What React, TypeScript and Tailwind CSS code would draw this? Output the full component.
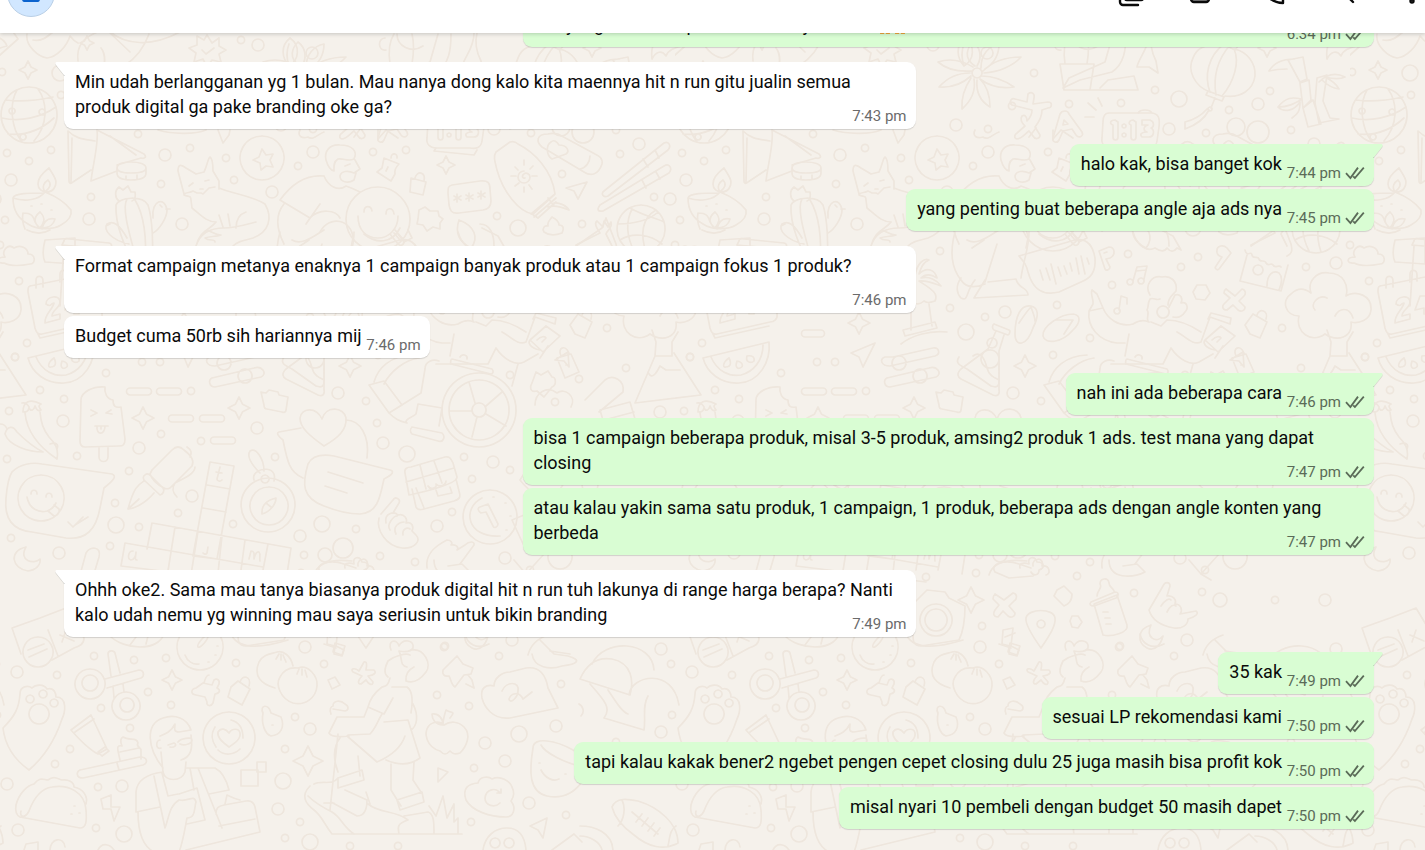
/**
 * Chat conversation view
 * Header bar on top, message groups anchored to the bottom over a doodle wallpaper.
 */

import type { ReactNode } from 'react';
import { clsx } from 'clsx';

interface Message {
  text: ReactNode;
  time: string;
}

interface MessageGroup {
  from: 'me' | 'them';
  /** Continues a group that started further up, so it has no tail */
  continued?: boolean;
  messages: Message[];
}

const groups: MessageGroup[] = [
  {
    from: 'me',
    continued: true,
    messages: [
      {
        text: (
          <>
            Betul kak, nanti semua materi dan update terbarunya bisa langsung diakses dari member area ya, tinggal login saja
            <br />
            kak yang 1 bulan dipakai selamanya kakak <Hands />
          </>
        ),
        time: '6:34 pm',
      },
    ],
  },
  {
    from: 'them',
    messages: [
      {
        text: 'Min udah berlangganan yg 1 bulan. Mau nanya dong kalo kita maennya hit n run gitu jualin semua produk digital ga pake branding oke ga?',
        time: '7:43 pm',
      },
    ],
  },
  {
    from: 'me',
    messages: [
      { text: 'halo kak, bisa banget kok', time: '7:44 pm' },
      { text: 'yang penting buat beberapa angle aja ads nya', time: '7:45 pm' },
    ],
  },
  {
    from: 'them',
    messages: [
      {
        text: 'Format campaign metanya enaknya 1 campaign banyak produk atau 1 campaign fokus 1 produk?',
        time: '7:46 pm',
      },
      { text: 'Budget cuma 50rb sih hariannya mij', time: '7:46 pm' },
    ],
  },
  {
    from: 'me',
    messages: [
      { text: 'nah ini ada beberapa cara', time: '7:46 pm' },
      {
        text: 'bisa 1 campaign beberapa produk, misal 3-5 produk, amsing2 produk 1 ads. test mana yang dapat closing',
        time: '7:47 pm',
      },
      {
        text: 'atau kalau yakin sama satu produk, 1 campaign, 1 produk, beberapa ads dengan angle konten yang berbeda',
        time: '7:47 pm',
      },
    ],
  },
  {
    from: 'them',
    messages: [
      {
        text: 'Ohhh oke2. Sama mau tanya biasanya produk digital hit n run tuh lakunya di range harga berapa? Nanti kalo udah nemu yg winning mau saya seriusin untuk bikin branding',
        time: '7:49 pm',
      },
    ],
  },
  {
    from: 'me',
    messages: [
      { text: '35 kak', time: '7:49 pm' },
      { text: 'sesuai LP rekomendasi kami', time: '7:50 pm' },
      {
        text: 'tapi kalau kakak bener2 ngebet pengen cepet closing dulu 25 juga masih bisa profit kok',
        time: '7:50 pm',
      },
      { text: 'misal nyari 10 pembeli dengan budget 50 masih dapet', time: '7:50 pm' },
    ],
  },
];

/* Wallpaper: one 675px wide tile of line doodles */

const smallDots: [number, number][] = [
  [2, 72], [61, 95], [241, 40], [7, 153], [51, 150], [29, 161], [138, 134], [190, 148], [161, 184],
  [226, 158], [234, 180], [91, 197], [5, 220], [298, 166], [373, 152], [406, 150], [480, 90],
  [446, 103], [595, 91], [554, 110], [531, 133], [616, 130], [337, 106], [359, 73], [394, 104],
  [313, 129], [620, 154], [562, 174], [497, 216], [582, 224], [654, 197], [265, 251], [275, 308],
  [310, 317], [382, 305], [415, 338], [378, 355], [453, 254], [437, 285], [506, 267], [523, 257],
  [631, 267], [675, 245], [694, 281], [607, 328], [626, 368], [690, 357], [579, 379], [555, 402],
  [702, 343], [15, 357], [106, 373], [142, 362], [160, 362], [40, 390], [64, 399], [9, 411],
  [191, 391], [161, 434], [77, 456], [129, 471], [7, 459], [115, 503], [178, 513], [139, 527],
  [233, 524], [275, 457], [377, 423], [366, 401], [464, 457], [472, 479], [452, 512], [356, 529],
  [380, 556], [415, 562], [304, 555], [110, 546], [11, 538], [201, 441], [94, 656], [134, 660],
  [166, 658], [236, 663], [57, 675], [148, 692], [171, 705], [101, 708], [130, 728], [70, 749],
  [55, 764], [98, 787], [96, 828], [285, 749], [300, 822], [285, 838], [295, 717], [324, 664],
  [445, 646], [499, 656], [437, 695], [469, 706], [474, 768], [471, 822], [566, 815], [561, 684],
  [350, 846], [398, 846], [251, 577], [301, 573], [402, 576], [307, 626], [459, 593], [527, 592],
  [444, 647], [671, 664], [672, 715], [616, 742], [510, 375], [533, 455], [560, 470], [602, 436],
  [645, 470], [510, 470], [575, 520], [640, 545], [530, 570], [600, 600],
];

const bigDots: [number, number, number][] = [
  [60, 73, 8], [258, 45, 6], [11, 180, 6], [165, 155, 6], [89, 219, 6], [182, 224, 6], [272, 192, 6],
  [313, 152, 6], [504, 99, 8], [583, 104, 6], [494, 129, 6], [281, 125, 6], [312, 53, 6],
  [561, 127, 9], [583, 132, 11], [639, 144, 6], [518, 228, 8], [670, 199, 6], [330, 312, 6],
  [291, 332, 8], [338, 393, 6], [661, 263, 6], [63, 421, 6], [139, 448, 6], [192, 496, 6],
  [257, 428, 6], [383, 443, 6], [407, 454, 8], [493, 462, 6], [437, 526, 6], [322, 524, 8],
  [300, 536, 6], [116, 525, 8], [59, 553, 6], [325, 555, 7], [343, 548, 10], [505, 558, 6],
  [17, 672, 6], [305, 647, 6], [310, 729, 6], [283, 781, 8], [278, 809, 6], [310, 842, 8],
  [122, 786, 6], [124, 834, 8], [7, 784, 6], [18, 830, 6], [485, 743, 6], [519, 734, 8],
  [505, 761, 6], [529, 803, 6], [556, 726, 6], [512, 640, 6], [661, 649, 6], [661, 732, 6],
  [590, 485, 8], [660, 412, 6], [545, 600, 7], [650, 600, 6],
];

const sparkles: [number, number, number][] = [
  [28, 70, 9], [446, 165, 9], [184, 323, 11], [350, 366, 11], [143, 418, 11], [239, 408, 11],
  [172, 680, 10], [308, 761, 15], [296, 600, 13], [560, 440, 10], [620, 510, 9], [87, 43, 7],
  [592, 48, 9],
];

const doodles: string[] = [
  // pot, leaves and petals along the top
  'M27 34c-2 12 12 23 20 24 10-1 20-12 23-22 3 4 6 6 8 7M33 40c8 2 14-3 20-8M0 55l18-16-9-13',
  'M78 61c-2-16 6-24 22-30M101 48c5 6 4 18 1 28M149 34c-5 14-14 25-25 32M110 32c15 12 40 16 70 0M110 33l20 19',
  'M207 35l5 8 7-5 0 8 7 4-7 4 2 8-9-2-5 7-4-8-9 3 2-9-7-5 8-3 0-9 7 4zM202 50l4 4 8-6',
  'M290 38c-10 8-8 20-1 28 10-6 12-20 1-28M289 66c-3-9-2-17 0-22',
  // globe
  'M29 87a28 28 0 1 0 .1 0M6 100c15 2 33 0 47-3M2 118c18 4 38 0 54-11M8 134c18 2 34-5 46-16M17 90c-8 14-6 38 5 52M38 89c10 14 10 36-4 52M12 108a3 3 0 1 0 .1 0M42 109a3 3 0 1 0 .1 0M23 134a3 3 0 1 0 .1 0',
  // flower
  'M302 68a5 5 0 1 0 .1 0M300 66c-12-8-8-18-2-24 8 6 9 16 4 24M306 68c0-14 8-22 18-24 0 12-6 20-14 25M308 71c10-10 22-14 38-14-8 9-22 15-37 16M307 76c12 0 22 4 32 11-14 2-26-2-34-8M305 79c8 8 10 18 10 28-10-6-14-16-13-27M299 79c2 12-3 22-12 30-1-12 3-22 9-31M296 76c-9 8-20 12-32 11 8-9 18-14 31-14M297 71c-14 1-26-2-34-9 12-4 25-1 35 5',
  // translate glyphs
  'M337 105c-4-3 0-8 3-6l12 3 1-8c4-3 7 0 6 4l-1 6 15-2c5 0 4 6 0 6l-6 2c0 6-3 12-7 17l5 8c0 4-5 5-7 1l-4-5c-5 4-8 8-12 8-4-1-2-5 0-6l8-7c-4-4-5-7-3-10 3-2 5 1 5 5 3-3 5-7 5-11zM378 138l7-24c2-4 8-4 9 0l13 18c2 4-3 7-6 3l-4-6-9 2-4 9c-2 4-7 2-6-2zM388 125l1-5 4 4z',
  // plant pot
  'M385 64h34l-4 26h-26zM390 64c-2-14 0-24 4-30M412 64c2-12 2-22 0-30M386 50c-8 2-9-12-1-12M397 34c0 12 14 20 26 12M451 34c0 16-2 30-14 38l-32 8-17 8 6-10 36-16 8-28M399 90h64l-4-14-26 4-8 8M474 33c0 16-10 24-12 34h12l9 6-2-12c-5-10-6-20-4-28',
  // alarm clock
  'M434 113h42c8 0 9 6 8 14l-2 14c-1 7-6 8-12 7h-34c-6 0-10-4-9-10l1-16c0-6 2-9 6-9zM463 113c2-4 12-4 14 0M436 148l-2 3 40 4 3-5M421 110l-8-7M427 106l-4-8M419 117h-9M440 120c-5 0-6 4-2 5v12c0 4 5 4 5 0v-15zM449 124a2 2 0 1 0 .1 0M449 133a2 2 0 1 0 .1 0M458 120c-4 0-5 4-2 5v12c0 4 5 4 5 0v-15zM467 120h8c5 2 4 7 1 8 4 2 3 9-2 9h-7c-3-3 0-5 5-5-4-1-4-6 1-7h-6z',
  // lantern
  'M535 92c-16-6-23-22-17-34 4-12 16-15 32-14M550 96c16 2 28-6 30-20 1-13-8-24-20-27M535 92c-6-16-2-36 14-48M541 95c-3-18 2-36 14-50M547 96c12-14 18-34 12-47M543 42l17 8 4-5-20-8zM533 91l16 6-2 4-16-6zM540 98l-4 10M535 107a2 2 0 1 0 .1 0M534 110c-4 8-10 14-24 19v-7c8-2 16-6 22-13',
  // bamboo
  'M613 60l15-3 4 22-7 3zM625 83l9-3 2 20-8 8zM628 108l10-8 8 24-13 3zM642 78l10-3-4 26 7 17 9 1-20 4-4-20zM594 71c6-10 16-12 25-12M594 71c8-2 14-2 18-2M644 82c8-8 16-10 26-5-6 3-12 2-20 0 8 4 12 8 14 12-8-1-12-4-17-9M603 107c8-10 14-10 24-8-7 4-13 8-24 8 6 6 16 4 22-5 0 9-2 12-8 16',
  'M656 40c10-6 22-4 26 6-8 2-14 4-16 10-4-6-10-5-14 3-1-8 0-14 4-19',
  // map and bowl
  'M68 131l1 50c0 3 2 3 4 1l18-12M72 138l-1 44M68 131c8 8 16 8 27 10M97 130c2 12-4 34-6 51l26-10M97 130l47 24c3 3 1 5-3 4l-24 7M110 136l26 19',
  'M131 162c-8 0-14 2-14 6s6 5 14 5 15-1 15-5-7-6-15-6M117 168v5c0 5 6 7 14 7s15-2 15-7v-5M126 176v4M137 175v4',
  // oil lamp
  'M49 168c-8 6-11 12-11 16 0 5 4 8 9 8 6 0 9-5 9-10 0-4-4-9-7-14M45 192c-4-6 0-10 3-12 4 4 2 8-3 12M44 193c-14 0-30 0-31 5 0 10 4 20 15 26 9 6 25 6 33 1 9-5 11-10 10-15-6-8-16-14-26-18-6 8-20 10-32 6M23 213c9 0 10 3 12 9M25 229c-3-7-3-11-2-16M40 212c-9 7-4 14 2 17M40 212c7 7 3 12 0 16M55 219c-9-2-12 5-13 10M55 219c-2 8-8 9-14 9M27 230c8 4 16 4 23 0M31 206h1M41 204h1M51 210h1',
  // cactus
  'M119 201c-4-3-5-10 0-14l4 3 5-4 3 6 4 0c1 5 0 8-3 9M116 205c-1 20 8 40 20 64M116 205c3-8 26-10 32 0 4 12 6 40 4 64M127 199c-6 10 4 40 12 70M135 200c10 16 12 40 10 69M127 238c-8-14-14-18-20-14-4 6 4 16 22 20M153 218c-2-18 12-22 14-8 0 8-8 20-14 23M106 226l4-2M160 205l2 2M166 209l4 0',
  // box
  'M62 245l2-4c0-2 2-3 5-2l40 4c4 1 3 5 0 6M62 245l46 4M64 246l-4 60',
  // fox
  'M184 194l-6-23c0-7 3-7 8-3l10 6 8-2c3-6 4-14 6-15 3 2 3 10 3 14l6 10v8M184 194c3-2 6-1 9-3l4 2 4 0 2 1 6-6 6-1M189 186l4-3M205 181l4-1M200 189l3 0M184 195c4 2 7 0 7 5l1 8c8 6 14 14 24 14M219 188c14 6 34 8 46 16 8 14 4 28-12 34-12 3-16 4-20 8M216 222c-6 8-16 8-20 24M196 246c4-12 14-18 28-18 12 0 24-4 32-6M205 231c6-2 8 4 16 4-6 2-11 1-16 3 4 4 10 0 10 4M219 215l4 12M228 214l2 12M236 228c0-10 4-14 10-16',
  // star coin
  'M262 136a22 22 0 1 0 .1 0M262 149l4 6 7-1-3 6 3 7-7-1-5 4-1-7-7-3 6-3z',
  'M158 130c14 4 36 5 48 0M218 130l5 13 6-8 1-5M300 130c-3 6 2 9 8 7 5 4 10-3 16-5M354 137l7-9M378 130v9l8-9 12 8',
  // man and yum face
  'M326 160c-2-8 3-16 14-15 12 0 18 6 14 14-6 3-10-1-16 0-5 3-4 8-4 12-4-1-6-4-8-11M355 160l5 9-6 4c-6-3-13-2-14 3 0 6 8 8 14 4l2-7M345 166l5-2M324 176c-20-2-34 10-44 24l30 18-4 6 14-20M324 176c4 10 14 16 22 10 6 2 10 4 14 6M284 204c-10 12-6 28 0 40M310 218c10-10 26-8 30 0M320 232c10-18 32-12 33 6l-2 10',
  'M378 187a32 32 0 1 0 32 32c0-16-14-32-32-32M358 216c0 14 8 22 20 22 10 0 20-8 20-22M364 212c0-7 7-7 8-1M386 214c0-7 7-7 8 0M390 234l8 10c4 4 8-2 5-5l-8-9M394 233l6 7',
  'M384 158l15 6c-3 3-5 6-4 10l-4 7-14-9 5-4zM391 158c0-6 7-5 6 0M388 167l-2 4M411 178l15 4-3 13-13-3zM415 178c2-8 11-6 9 3',
  'M419 210l6-3 5 4 8 0 1 5 4 3-3 4v6l-7-2-6 4-4-6-6-1 1-5zM452 185l28-4c8-1 10 2 10 8l1 12c0 5-2 8-8 9l-24 3c-8 1-9-3-10-8l-1-12c0-5 0-7 4-8M457 194v8M454 196l7 4M461 196l-7 4M469 193v8M466 195l7 4M473 195l-7 4M481 191v8M478 193l7 4M485 193l-7 4M459 220c-4 12 0 22 12 28 8-10 4-22-12-28',
  // sun cream
  'M496 152l14-10c3-1 6 0 8 2 16 8 34 26 37 50l-22 20c-14-2-30-22-36-44-2-8-4-14-1-18M555 194l-24 20M556 198l-22 19M556 202l-18 16M548 198l6 8M532 214l6 4M548 207c5-2 14 0 21 3-2-4-10-8-15-7',
  'M524 171a6 6 0 1 0 6 6c0-3-4-5-6-3-3 2-1 5 1 4M524 160v5M524 187v5M511 176h5M532 176h5M515 167l3 3M529 185l3 4M515 186l4-3M530 169l3-3',
  // bandage and chopsticks
  'M548 134c-12 0-12 8-6 13l42 25c6 4 14 4 18-8 1-6-3-8-7-10l-37-20c-4-1-7-1-10 0M551 142c3-3 6 0 8 3 8 0 11 6 7 9l-14 5c-6-4-6-14-1-17M590 156c0 6-4 12-10 13',
  'M664 143c4-2 8 2 4 7l-60 46c-4 2-8-2-4-5zM664 166c5-3 9 2 5 7l-66 38c-6 1-6-2-3-6zM655 150l4 8M643 159l5 8M656 172l4 7M642 180l4 8',
  'M566 188l21-6-9 17-4-8zM544 232c-2-3 0-7 4-6-1-4 2-6 4-9 4 2 7 4 7 8 5 0 5 4 3 8-8 3-14 2-18-1M494 246c0-12-4-22-14-22M576 245l24-12c-4-6-6-10-3-12l6 6 1-6 4 6 3-5c2 6-4 8-5 12l6 12',
  // basketball
  'M641 205a24 24 0 1 0 .1 0M630 208c14 8 26 10 34 14M618 224c16 0 32-4 40-12M632 209c-6 12-6 26 2 42M620 240c12-8 30-6 42 4M656 210c-14 8-16 24-10 42',
  // palm and runner legs
  'M240 276c2-14 10-18 14-16-6 2-8 8-10 14 8-8 16-4 18 4-6-4-12-4-16 0 8-2 16 2 20 8-8-3-14-6-22-5 12 8 20 12 16 20-6 2-8 2-11 0-4 4-8 3-11 2M236 306v24M254 304l3 22M228 330l32-8 2 6-32 8zM226 344c10-8 28-14 46-12',
  'M280 232c-6 22-2 38 6 48 5 8 14 8 24 4M286 278c-6 8-4 16 0 20 8 4 4-6 14-18M310 280l-11 18 54-3c0-8-10-6-12-16l-28 3M322 244l-12 38M354 232c0 16-6 30-8 46M292 240c10 6 22-4 32-10M297 248l12-8',
  // voice bubble
  'M344 256l56-16c12-2 18 6 20 18 1 14-4 20-14 24l-22 10c-16 4-26-2-31-20-2-8-4-10-9-16M365 270l3 10M371 268l4 12M376 264l5 20M383 267l3 9M389 266l3 8M395 263l2 8M401 258l3 16M406 256l4 18M412 258l2 6M364 234c12 10 28 10 36-6M398 234l6 8 8-4-4-8',
  'M424 251l10-4c6 0 7 8 1 11l-4 1 4 8c0 3-4 4-5 2zM429 253l3-1M458 232c4 14 14 20 22 16 6 4 10 3 12 0 4 5 8 3 10 0l4 2-8-14-16-8M542 250c0-4 6-6 10-2l4 5-12 16c-2 2-5-1-3-3l6-9c-3-1-6-3-5-7',
  // house
  'M576 246l26-18 4-10M606 218l10 26c2 8 0 10-4 12M570 250c2 8 6 0 7 5 1 5 6 0 7 4 1 4 6 0 7 4 2 4 6-1 7 2 2 4 6-1 8 2M572 255l-7 26 41 10 7-26M583 265a5 5 0 1 0 .1 0M592 286c0-12 6-16 12-13 4 4 3 10 0 17',
  // music and hexagon
  'M458 281l4-14 10-1-3 13M461 271l10-1M455 279a3 3 0 1 0 .1 0M466 278a3 3 0 1 0 .1 0M444 310l2-14 6 2 0 6M442 308a3 3 0 1 0 .1 0M522 285l9 0 4 8-5 7-9-1-3-7zM551 289l9 7 7-7c4 1 4 5 2 7l-5 5 6 6c0 4-4 5-7 3l-5-5-6 5c-5 0-5-4-3-6l6-6-6-5c0-3 2-4 2-4M680 257c-4-6 3-14 9-9 6-4 14 0 14 6 8 0 8 10 2 10-10 2-20 2-26-1-8 1-8-6 1-6M720 240l30-2v26l-30-2c-3-6-2-14 0-22',
  // dancer with phone
  'M414 311c-2 16 10 30 28 32h8M414 311l14-3-6-14-5-4c-2 4 2 10 1 14l-4 7M428 308c4 10 16 20 30 16M454 334l-4 22M458 324c6-4 12-4 16-2M473 321c-2-4 2-8-1-11 2-3 0-6 3-11 4-2 6 2 10 0M475 295c-6-10 2-20 12-18 8-2 16 4 14 14-3 4-8 6-8 14M488 306a6 6 0 1 0 .1 0M494 307l6-12c6-2 8 4 6 8 6-2 8 5 4 9-4 6-8 6-12 5M476 322l10 4 6-6c10 0 22 4 34 12M526 342c-8 4-16-6-24-10M526 342l9-25 20 7 1-6-20-5-3 6M548 346l-8 12M530 340l16-14 14 10-17 16zM537 340c4-4 8-4 9-2l-4 4M530 340c-2 2-1 8 10 10M436 364l52 0 8-16c8 12 20 18 28 14l14-8M518 364l-6 22',
  // slippers and flask
  'M356 306c-10-2-16 10-16 28 0 14 12 12 18-6 6-12 6-20-2-22M344 323c4-6 8-12 12-16 2 6 4 10 4 14M398 314c8 1 8 8 0 16-12 14-28 14-30 6-1-10 18-22 30-22M380 320l18 0-9 14',
  'M319 324l15 6c2 1 0 5-1 5l-14-5c-2-1-2-5 0-6M321 331l-8 18-27 20c-5 5-3 8 0 10l32 16c5 2 7-1 6-6l0-38 5-16M317 338a5 5 0 1 0 .1 0M315 350a9 9 0 1 0 .1 0M298 356c8-6 12 4 14 12 2 8 8 10 12 12',
  // tags and cursors
  'M570 325l8-11 14 8-7 16-10-4zM582 315c2-8 12-4 9 4M557 358l14-4 8 18-14 6zM561 356c-4-8 4-12 8-3M566 365h1M555 360l13-8 1 15-5-6zM536 372l5 3 7-4 4 6c4 0 5 8 0 10l-8 10-7-6c-8 2-7-5-5-8z',
  // puff tree and volcano
  'M650 334c-14 10-30-2-26-18-14 0-18-16-8-22 8-8 16-4 20-1-4-12 6-22 18-20 14 0 20 12 17 23 10-6 26-1 25 14-1 10-12 14-20 12 2 16-14 20-26 12M640 310c-6-6 4-16 12-12M660 316c4-8 14-10 18 2M652 330l4 12-1 14h17v-14l6-10M655 356l-20 47 66-8-27-42M648 372c4 10 10-2 12-6l6 4 14 0',
  // calendar and watermelon
  'M30 286l60-12c6 0 7 6 8 10l4 30c1 5-3 8-7 8l-53 12c-4 1-6-2-7-6l-7-36c0-4 0-5 2-6M36 288v-8c0-5 7-5 7 1v6M60 282v-8c0-5 7-5 7 1v6M82 278v-8c0-5 7-5 7 1v6M46 304c0-8 14-10 14-2 0 6-8 8-8 14l8-2v5l-15 4c-1-8 8-14 9-20-4 0-2 5-8 1M70 296l-5 14 9-2v6h5v-18zM38 334l2 4 54-12',
  'M28 358l66-16c2 20-10 40-30 41-18 1-32-10-36-25M36 357c6 14 18 20 30 18 12-3 22-14 22-30M54 358c-6 4-7 10-3 9 4 0 6-3 3-9M62 361c-2 6 0 8 3 7 4-1 3-6-3-7M72 356c-2 6 4 8 7 5 1-4-2-6-7-5',
  // dashes
  'M130 330h16a3 3 0 0 1 0 7h-16a3 3 0 0 1 0-7M130 388h18a3 3 0 0 1 0 7h-18a3 3 0 0 1 0-7M160 388h18a3 3 0 0 1 0 7h-18a3 3 0 0 1 0-7M172 415h18a3 3 0 0 1 0 7h-18a3 3 0 0 1 0-7M203 415h18a3 3 0 0 1 0 7h-18a3 3 0 0 1 0-7M214 437h18a3 3 0 0 1 0 7h-18a3 3 0 0 1 0-7',
  'M176 353l24-10-12 24-4-10zM218 357l40-9c6-1 8 6 2 8l-45 10c-9 0-11-7-5-9zM224 356a7 7 0 1 0 .1 0M212 378l42-10c8-3 14 6 7 9l-46 10c-6 0-7-7-3-9M245 369a7 7 0 1 0 .1 0',
  // chilies and ice lolly
  'M23 412c0-10 6-14 18-8-4 2-1 4 0 6-4 2-5-2-6-4-1 4-4 6-6 2-1 4-3 4-6 4M25 413c2 20 14 34 32 46 2-10-2-16-8-22-6-8-8-14-9-25M22 403c4-1 6 2 7 4M5 434c2-8 8-9 12-2 6 6 18 16 26 20-14 0-34-6-38-18M0 424c4 0 6 2 7 5M50 444c6-2 9 0 7 5',
  'M81 400c0-8 12-14 24-13-1 6 2 12 8 13 0 6 2 8 8 7l4 32c0 6-2 7-6 7l-34 1c-4 0-5-3-5-6zM99 447v10c0 6 9 6 9 0v-10M91 410l6 3-6 3M111 410l-5 3 6 1M95 426l13 0M97 426c-1 10 8 9 8 0M101 426v3M261 392l5 1 3-3 9 2 1 3 9 2-2 13c0 2-2 3-4 2l-15-3c-3 0-3-2-3-4z',
  // wheelchair
  'M479 373a37 37 0 1 0 .1 0M479 380a30 30 0 1 0 .1 0M479 403a7 7 0 1 0 .1 0M469 382l6 21M486 406l16-14M486 414l20 12M477 417l-5 20M449 411h23M369 385l15-4 18 24-13 8zM384 384c6-12 20-24 35-26M374 382c4-14 16-26 38-27M389 413l32-20 4-24c0-8 8-10 14-8M406 422c0-4 6-4 10-8l2-10 24 4-3 18M412 427l30 6c4 4 1 10-4 8l-26-7c-2-2-2-5 0-7M452 359l40 10c2 2 1 5-1 5l-40-10c-1-2 0-5 1-5M460 357c2-4 8-2 7 2M389 413c6 6 10 8 18 10M284 357c-4 6 0 8 8 12l24 17c6 2 8 0 8-4v-26',
  // fountain pen
  'M152 470l20-20c4-4 8-4 12 0 8 6 10 12 8 16l-22 22c-2 1-4 1-6 0-8-4-12-8-14-14zM145 475c2-2 4-1 6 1l12 12c2 3 0 6-3 7l-16-15c-1-2-1-4 1-5M144 481c-6 4-10 6-16 28 4 0 16-4 26-16M128 509l11-10M187 447c6 4 4 7 3 10M195 467c0 6-8 10-20 16-4 6-2 10 2 14',
  // smiling chat bubble
  'M12 472c8-8 20-10 30-8l70 10c5 2 2 6-8 14l-4 20c-4 22-14 32-34 30l-34-6c-20-2-28-14-26-34 1-12 2-20 6-26M41 475a23 23 0 1 0 .1 0M27 497c2 12 12 16 20 14 6-2 8-6 9-8M31 494c0-5 6-5 6 0M46 497c0-5 6-5 6 0M48 511l6 5c4 0 6-4 5-7l-5-4M68 522l5 5 10-10M75 525l13-8',
  // crossword
  'M210 462l24 4-17 93-24-3zM207 485l23 4M203 508l23 4M152 523l139 25-4 26M152 523l-5 26M125 543l138 24M125 543l-4 23 130 16M175 527l-8 50M198 531l-8 50M222 536l-5 46M245 540l-4 30M268 544l-5 26M220 467l-3 12c0 2 3 3 5 1M216 472l6 1M133 551c-5 0-6 8-2 9 3 0 5-4 5-8 0 4-2 8 1 8M208 547l-1 6c-1 2-3 1-4 0M249 559l2-8c4 0 3 4 3 8 1-5 3-8 5-7 2 2 0 6 1 9',
  // compass
  'M268 478a27 27 0 1 0 .1 0M269 487a19 19 0 1 0 .1 0M262 512c0-8 6-12 14-14 0 6-6 14-14 16zM266 503l5 4M254 480c-2-6 4-10 10-11 8 0 12 4 10 12M265 475a4 4 0 1 0 .1 0M260 473c-8-8-14-16-10-22 6-4 14 8 14 20',
  // heart and text bubbles
  'M324 446c-14-10-24-18-24-28 1-10 16-12 22 1 4-14 22-12 24-1 1 12-8 20-22 28M301 428l-22 4c-3 1-1 4 4 8 4 20 6 32 20 38M346 420c14 0 24 16 21 38M308 464c4-8 14-10 26-8l56 14c4 1 4 4-6 9-4 18-6 34-24 35-12 0-26-4-36-8-22-8-22-22-16-42M328 472l35 11M325 486l22 7',
  'M405 473c-1-4 2-6 6-6l34-10c5-1 6 2 8 6l4 14c1 6-28 14-48 18zM420 465l6 24M434 461l8 22M406 482l48-14M412 489l4 18c1 3 4 3 8 2l30-8c6-2 7-4 5-10l-3-12M428 486c2 4 10 2 8-2 4 4 10 1 10-3M436 490l2 6 14-3-2-6M416 488l8 20',
  'M490 490a27 27 0 1 0 .1 0M482 498c-20 10-16 40 18 38M480 507l8-3 10 20c0 3-4 5-5 2l-7-14-5 1c-3-2-4-5-1-6M493 497h1M505 503h1M510 516h1M506 530h1',
  // hands
  'M381 514l12-14c2-4 8-1 6 3l-6 10M386 523c-2-10 8-12 12-8 6-2 10 4 8 8 6-2 8 4 6 8l4 4c6 6-2 14-14 13-16-2-26-18-23-30M390 530c-4-6 4-14 7-14M396 534c-4-8 4-12 8-12M403 535c-1-6 4-8 7-6M427 568c-2-14 8-22 20-28 4 0 6 3 4 5 6-1 8 3 6 5l8-5c4-4 10-4 9 0l-14 19',
  'M26 547c-18 4-14 22 2 24 8-1 13-6 12-12-6 6-22 2-14-12M80 575l6-22c4-7 16-7 13 4l-6 20M314 575c4-14 20-16 38-14M358 566c-2-8 12-10 9 0 8-1 9 8 4 9',
  // eye patch box, pie, clock
  'M12 628l28-10 26-10 18 30c0 6-4 8-10 10l-22 12M12 628l9 26M48 630l10 26M60 635l14 6M66 630l-4 12M38 637a15 15 0 1 0 .1 0M28 650l16-6M29 657l18-8M110 636c14 14 48 16 54-2M130 645l6-8M146 644l2-8M200 624a23 23 0 1 0 .1 0M198 647c-2-2 8-14 10-12 1 4-8 14-10 12M185 655c2 6 8 10 14 9M217 646h1M215 655h1M208 662h1M232 636c8 14 30 12 56 4',
  // scissors
  'M90 669a15 15 0 1 0 .1 0M90 675a8 8 0 1 0 .1 0M126 692a14 14 0 1 0 .1 0M127 698a7 7 0 1 0 .1 0M105 679l34-9c5 0 6 6 2 8l-34 10M108 654c0-4 6-4 7-1l5 20M108 654l3 22M113 686l1 12M123 684l1 8',
  // paw and tube
  'M3 728c12-12 16-20 17-34 0-8 8-9 12-6 4-4 12-4 15 1 8-2 9 6 9 8 12 0 9 16 6 22-8 24-20 40-33 51-14-10-24-24-26-42M39 704a10 10 0 1 0 .1 0M30 695a4 4 0 1 0 .1 0M43 690a4 4 0 1 0 .1 0M54 699a4 4 0 1 0 .1 0',
  'M71 730l20-15 16 34-9 5c-8-4-20-16-27-24M75 732l19-13M98 752l7-5 4 4-7 5zM80 770l60-13c8 0 8 6 3 8l-60 13c-7 0-7-6-3-8M117 763l2 7M120 760l-2-9c-1-4 0-6 4-5-2-5-1-8 1-9 6 4 14 0 15 6-3 4 4 4 3 8v8M120 752l19-4',
  // taco and bolt
  'M20 817c-4-2-5-6-4-12 3-12 12-20 18-21 6-8 10-4 14-4 6-5 10-1 14 0 6-1 12 2 12 7 10 2 14 10 12 17M20 817l60 11c6 0 7-6 6-18-1-18-18-26-34-23-14 2-20 16-23 24-4 8-10 6-8 0M74 806h1M79 813h1M71 814h1M101 799l10-4 0 12 9 0-6 14-3-12-8 0zM24 850l2-6 12-2v8M50 850c0-12 14-14 15-3M98 850c4-8 12-6 16 0',
  'M203 683l9 2 2-5c3-2 6 0 5 4l-2 4c4 2 3 5-2 6l-2 9c-2 4-7 3-6-1l-2-5-9-2c-6-1-5-6 0-7zM204 683c0 0 2-8 5-8M231 687l7-6 12 8-8 16-14-8zM240 682c2-8 12-6 9 4M263 713c-4-8 6-10 8 0l10 4c4 10 0 18-10 19-6-2-10-12-8-23M272 725h1',
  // buns
  'M275 688c-14-4-22-12-16-26 4-8 12-8 18-10 6-2 14 4 16 14M276 659l3-5M281 660v-6M286 662l-3-7M298 668c10-4 20 8 19 18-1 12-12 20-24 17-12-4-18-18-13-26 4-8 10-10 18-9M297 674l2-5M302 675v-6M307 677l-2-7M328 680l7-3 5 8-8 4zM330 637l10-4M335 643l10 3-3 9-9-3zM324 644l12 4',
  'M364 662c3-1 3 3 2 8l8 0c3 3 0 5-6 6l5 6c0 4-4 3-7-2l-5 4c-4 0-3-4 1-8l-9-4c-3-3 1-5 6-1z',
  // latte cup and cubes
  'M229 712a26 26 0 1 0 .1 0M229 747c-8-6-12-10-11-15 3-5 8-3 11 1 3-5 10-5 11 0 1 6-5 10-11 14M215 727c-5 8-3 14 1 20M231 720c8 2 12 8 12 18M218 750c6 6 16 5 22-1M241 770h17v16h-17zM257 762h9v10h-9z',
  // reader with glasses
  'M163 768c-16-20-18-44 0-50 12-4 24 0 28 12l-12 2c-6 0-4-4-4-8-4 8-10 10-15 12M191 735c2 14 0 22-10 25M161 748c-6 2-5-8-1-8M161 752l2 20c2 10 18 10 22 0l1-10M168 745l6-2c4 2 0 5-4 4M178 742c2-3 14-6 14-2s-8 6-12 4M163 772c-16 2-26 8-27 20v20l24-5M154 776l11 52c4-10 4-22 14-28M162 773l6 23 10-2M187 768l28 0c8 4 12 14 14 22l-20 4M190 768l4 22M198 768l24 60M179 794l18-6 8 32-18 4M180 800c8 2 14-6 16 2-2 6 0 16-9 16-2 10-4 24-8 34M138 812c0 20 4 34 16 40M216 814c0-6 2-8 8-9l22-4c6-1 8 2 9 6l5 25-74 18M219 826l36-7M225 804l2-9c4 2 8 4 13 5',
  // hiker
  'M388 677c-6-4-2-12 0-16 8-6 18-8 22-6M391 650c-4-10 6-12 8-4 4-8 16-6 14 2-2 4-8 4-14 3M412 650c12-2 20 14 14 22-6 8-12 12-20 9-1-8 4-12 8-14M399 651c4 8 0 14 8 16M390 678c-2 8-4 8-8 9-8 6-12 12-14 20l16 7 9-16M392 687l15 0c6 4 6 14 4 26M382 714c-4 6-6 14-12 20l-22 1M368 707l-4 10-14 0M349 717l-12 0-8 16c2 4 12 4 20 3M331 714c-2-4 0-8 2-8 0-6 8-6 12-2 4 2 4 6 0 7l-12-2M413 704c6 12 4 22-2 26M384 722l24-2 12 38c-8 6-20 8-34 2M405 736c-4 12-14 20-28 26l-30-26M340 738c-8 10-6 24-2 34M358 756l2 20M338 778l24-8 2 10-26 8zM338 734l-8 76M324 803h10M391 764v26l10 16M414 762l-1 18 8 12M397 800l25-8 2 10-24 8zM345 790l22 10c0 12-4 16-10 16l-26-14M366 792l4 12M368 804c12 10 28 6 40 16-12 4-10 8-9 14M404 816l24-4c6 2 6 10 6 22M310 786c-10 10-4 18 4 24 8 6 10 14 18 24h130M308 796c8 8 16 12 24 16 10 6 10 14 22 22M429 806l7 10 7-20 4 22 7-14 0 18 4-4v16M338 778c-6 8-16 2-24 6',
  // pin, apple, cloud arrow
  'M443 670l14-14 6 8 10 4-2 6-7 1-9 12c-4-2-4-8-6-11-5 1-7-2-6-6M466 684l8 4-2-8-4-5M440 751c-14-4-16-18-12-24 4-6 12-6 16-2 6-4 14-4 20 2 8 8 2 20-4 26-6 2-8 0-10-2-4 4-6 4-10 0M443 725c0-6-4-12-11-11 0 4 2 10 11 11 0-6 2-12 3-15 6 4 10 0 4 8',
  'M494 686c0-8 8-14 16-14l16-4c14-2 20 8 22 20l10 20-48 10c-18 2-26-12-28-20-2-10 4-14 12-12M502 691c4-10 18-10 16 0 0 6-8 14-9 8 2-6 10-8 14 0l9-7M466 800c-4-12 2-16 12-17 2-8 12-6 14-4 8-4 18 2 20 8 4 8 0 12-1 14 6 8 2 16-5 16-16 0-34-6-40-17M500 793c-4-6-14-4-15 5 0 8 10 10 15 5M497 793h4v-4M438 768l10 4-10 10z',
  'M528 655c2-8 8-16 20-20M540 640l14 14 14 2c14 4 10 8-6 10-12 4-28 2-30-12M550 651l20 3M465 634c2 10 12 16 24 10M483 850c2-14 12-22 24-22 14 0 18 10 19 22M495 838a5 5 0 1 0 .1 0M509 838a5 5 0 1 0 .1 0M530 826l17-8-4 20-5-8zM552 850l22-16 8 8',
  // smiling mug
  'M533 748c0-6 6-8 14-7 18 2 36 14 42 22M541 745c4 8 24 18 42 22M533 748c-4 24-4 44 14 48 18 4 30-6 36-16M539 763h1M565 774h1M541 770c4 8 12 12 18 9',
  // camera, pin, bottle, hand
  'M238 604l14-14 18 2 4 6 16 8c0 14-2 26-6 34l-38 6c-8 0-8-6-8-12zM261 604a16 16 0 1 0 .1 0M261 609a11 11 0 1 0 .1 0M320 594l9 6 9-7c5 1 4 6 1 8l-5 5 6 7c0 4-4 5-7 3l-5-5-5 6c-5 0-5-4-3-7l4-5-6-6c0-3 2-5 2-5M366 648c-10-14-16-24-15-30 2-10 28-10 29 0 1 8-6 18-14 30M366 620a4 4 0 1 0 .1 0M397 616l6 0 4 6-4 6-6-1-2-6zM328 630l10-2-2 18 8 4-2 6-8-2 1-8-8-2z',
  'M419 604l23-9 10 30c2 8-16 12-24 10zM416 602l24-10c4 0 4 4 1 6l-22 8c-4 0-5-2-3-4M422 596c0-6 6-8 3-12 0-6 8-7 9-1 0 4 4 5 5 8M428 612h5M430 618h5M431 624h5M382 590l7-4 8 8c0 8-4 10-8 12l-10-10zM474 610l14-24c2-5 7-4 7 0l-3 10c6-1 10 4 8 8 6 0 8 6 5 10l16-3c4 3-2 6-8 8 0 6-6 10-14 9-12-2-22-8-25-18M486 606c4-6 8-8 10-6M492 612c3-6 6-8 9-6M476 625c-14 4-14 18-4 23 8 4 14-4 16-12-6 8-18 2-12-11',
  'M320 572c-6-10 12-12 24-8l12 4M320 572l14 6 24-2M345 568c-2-6 6-5 9-4-2-8 6-8 8-2 8 0 8 6 2 8 0 6-6 6-8 2M434 560c0 20 24 18 36 12l-8-8-14 2M526 574l-12-14M526 574l18-20M526 574l10 6',
  // beach umbrella, football, cards on the right
  'M580 679c8-18 20-22 32-20 20 4 22 22 18 36zM592 664c12-26 60-24 62 6M629 695c2-20 44-28 50 10M608 690c8 12 14 22 20 24M590 684c14 16 22 24 14 34l40 12c2-12-2-24 4-34M579 704c4 2 6 8 2 12',
  'M612 807c4-10 16-8 26-6 20 6 40 22 40 42-14 8-30 4-44-8-14-10-20-20-22-28M632 812l26 22M636 822l6-8M642 826l6-8M648 831l6-8M654 836l6-8M618 826c6-6 8-18 4-26M668 846c2-10 2-16 8-20M580 826c14 0 32 6 33 24M580 836c10 0 20 6 22 14',
  'M520 480c8-16 26-20 44-12 4 16-6 30-24 30M520 480c6 8 14 14 20 18M600 410l30-8 10 34-30 8zM604 420l30-8M512 520l24-10 12 26-24 10zM600 540c14-10 32-8 40 6-12 12-30 10-40-6M560 545a12 12 0 1 0 .1 0M640 450c10 4 18 12 20 24-14 0-22-8-20-24M585 400l20-20c8-6 20 0 18 12l-24 20M535 405c0-12 12-20 22-12 8-6 20 4 14 14',
];

function sparklePath(x: number, y: number, r: number) {
  const i = r / 3;
  return `M${x} ${y - r}L${x + i} ${y - i}L${x + r} ${y}L${x + i} ${y + i}L${x} ${y + r}L${x - i} ${y + i}L${x - r} ${y}L${x - i} ${y - i}Z`;
}

function DoodleTile({ x }: { x: number }) {
  return (
    <g transform={`translate(${x} 0)`}>
      {smallDots.map(([cx, cy], i) => (
        <circle key={i} cx={cx} cy={cy} r={3.6} />
      ))}
      {bigDots.map(([cx, cy, r], i) => (
        <circle key={i} cx={cx} cy={cy} r={r} />
      ))}
      {sparkles.map(([sx, sy, r], i) => (
        <path key={i} d={sparklePath(sx, sy, r)} />
      ))}
      {doodles.map((d, i) => (
        <path key={i} d={d} />
      ))}
    </g>
  );
}

function Wallpaper() {
  return (
    <svg className="absolute inset-0 h-full w-full" aria-hidden="true">
      <defs>
        <pattern
          id="doodles"
          width="675"
          height="900"
          patternUnits="userSpaceOnUse"
          patternTransform="translate(0 -33)"
        >
          <g fill="none" stroke="#eee6dd" strokeWidth="1.7" strokeLinecap="round" strokeLinejoin="round">
            <DoodleTile x={0} />
            <DoodleTile x={-675} />
          </g>
        </pattern>
      </defs>
      <rect width="100%" height="100%" fill="url(#doodles)" />
    </svg>
  );
}

function Hands() {
  return (
    <svg className="inline-block h-5 w-8 align-[-4px]" viewBox="0 0 32 20" fill="#f0a63c" aria-hidden="true">
      <path d="M8 1l4 8 1 10H9l-1-3-1 3H3l1-10zM23 1l4 8 1 10h-4l-1-3-1 3h-4l1-10z" />
    </svg>
  );
}

function DoubleCheck() {
  return (
    <svg
      className="h-3.5 w-5"
      viewBox="0 0 20 14"
      fill="none"
      stroke="currentColor"
      strokeWidth="1.8"
      role="img"
      aria-label="Delivered"
    >
      <path d="M1 7.200l4.400 4.800L13 1.600M8.200 10.300l1.700 1.700L18.800 1.600" />
    </svg>
  );
}

function Tail({ mine }: { mine: boolean }) {
  return (
    <svg
      className={clsx(
        'absolute top-0 h-3.5 w-2.5 drop-shadow-[0_1px_0_rgba(11,20,26,0.13)]',
        mine ? '-right-[9px] text-[#d9fdd3]' : '-left-[9px] -scale-x-100 text-white'
      )}
      viewBox="0 0 10 14"
      fill="currentColor"
      aria-hidden="true"
    >
      <path d="M0 0h8c2 0 2 2 1 3L1 13H0z" />
    </svg>
  );
}

function Bubble({ message, mine, tail }: { message: Message; mine: boolean; tail: boolean }) {
  return (
    <div
      className={clsx(
        'relative max-w-[65%] rounded-[9px] pt-[7px] pr-[9px] pb-2.5 pl-[11px] shadow-[0_1px_1px_rgba(11,20,26,0.15)]',
        mine ? 'self-end bg-[#d9fdd3]' : 'self-start bg-white',
        tail && (mine ? 'rounded-tr-none' : 'rounded-tl-none')
      )}
    >
      {tail && <Tail mine={mine} />}
      <p className="text-lg leading-[25px] text-[#0a0a0a]">
        {message.text}
        {/* keeps room for the timestamp at the end of the last line */}
        <span className={clsx('inline-block', mine ? 'w-[83px]' : 'w-[59px]')} />
      </p>
      <div
        className={clsx(
          'absolute right-[9px] bottom-1 flex items-center gap-1 text-[15px] leading-[18px]',
          mine ? 'text-[#5b6b58]' : 'text-[#6b6b6b]'
        )}
      >
        <time>{message.time}</time>
        {mine && <DoubleCheck />}
      </div>
    </div>
  );
}

const headerIcons: { label: string; icon: ReactNode }[] = [
  {
    label: 'Media',
    icon: (
      <>
        <path d="M3 5v18a3 3 0 0 0 3 3h15" />
        <rect x="8" y="2" width="18" height="19" rx="2" />
      </>
    ),
  },
  { label: 'Notes', icon: <rect x="4" y="4" width="18" height="19" rx="3" fill="#8c8c8c" /> },
  {
    label: 'Call',
    icon: <path d="M6 4h6l2 7-4 3c2 4 4 6 7 7l3-4 6 3v4C15 24 6 16 6 4z" />,
  },
  {
    label: 'Search',
    icon: (
      <>
        <circle cx="14" cy="10" r="8" />
        <path d="M19 16l7 7" />
      </>
    ),
  },
  {
    label: 'Menu',
    icon: (
      <>
        <circle cx="15" cy="6" r="1.5" />
        <circle cx="15" cy="14" r="1.5" />
        <circle cx="15" cy="22" r="1.5" />
      </>
    ),
  },
];

function Header() {
  return (
    <header className="relative z-10 -mt-[47px] flex h-20 shrink-0 items-center justify-between bg-white pl-[7px] shadow-[0_1px_4px_rgba(11,20,26,0.2)]">
      <div className="flex h-12 w-12 items-center justify-center rounded-full border border-[#b9cfe6] bg-[#d1e7ff]">
        <svg className="h-6 w-6" viewBox="0 0 24 24" fill="#0b63ce" aria-hidden="true">
          <circle cx="12" cy="5" r="5" />
          <path d="M3 18c0-4 4-7 9-7s9 3 9 7c0 2-1 3-2 3H5c-1 0-2-1-2-3z" />
        </svg>
      </div>
      <div className="flex items-center gap-[42px]">
        {headerIcons.map(({ label, icon }) => (
          <button key={label} type="button" aria-label={label} className="text-[#0a0a0a]">
            <svg
              className="h-7 w-7"
              viewBox="0 0 28 28"
              fill="none"
              stroke="currentColor"
              strokeWidth="2.4"
              strokeLinecap="round"
              strokeLinejoin="round"
            >
              {icon}
            </svg>
          </button>
        ))}
      </div>
    </header>
  );
}

export default function App() {
  return (
    <div className="flex h-screen flex-col overflow-hidden bg-[#f5f1eb] font-[Roboto,sans-serif]">
      <Header />
      <main className="relative flex min-h-0 flex-1 flex-col overflow-hidden">
        <Wallpaper />
        <div className="relative flex min-h-0 flex-1 flex-col justify-end gap-[15px] pr-[51px] pb-[21px] pl-16">
          {groups.map((group, g) => (
            <section key={g} className="flex shrink-0 flex-col gap-[3px]">
              {group.messages.map((message, m) => (
                <Bubble
                  key={m}
                  message={message}
                  mine={group.from === 'me'}
                  tail={m === 0 && !group.continued}
                />
              ))}
            </section>
          ))}
        </div>
      </main>
    </div>
  );
}
